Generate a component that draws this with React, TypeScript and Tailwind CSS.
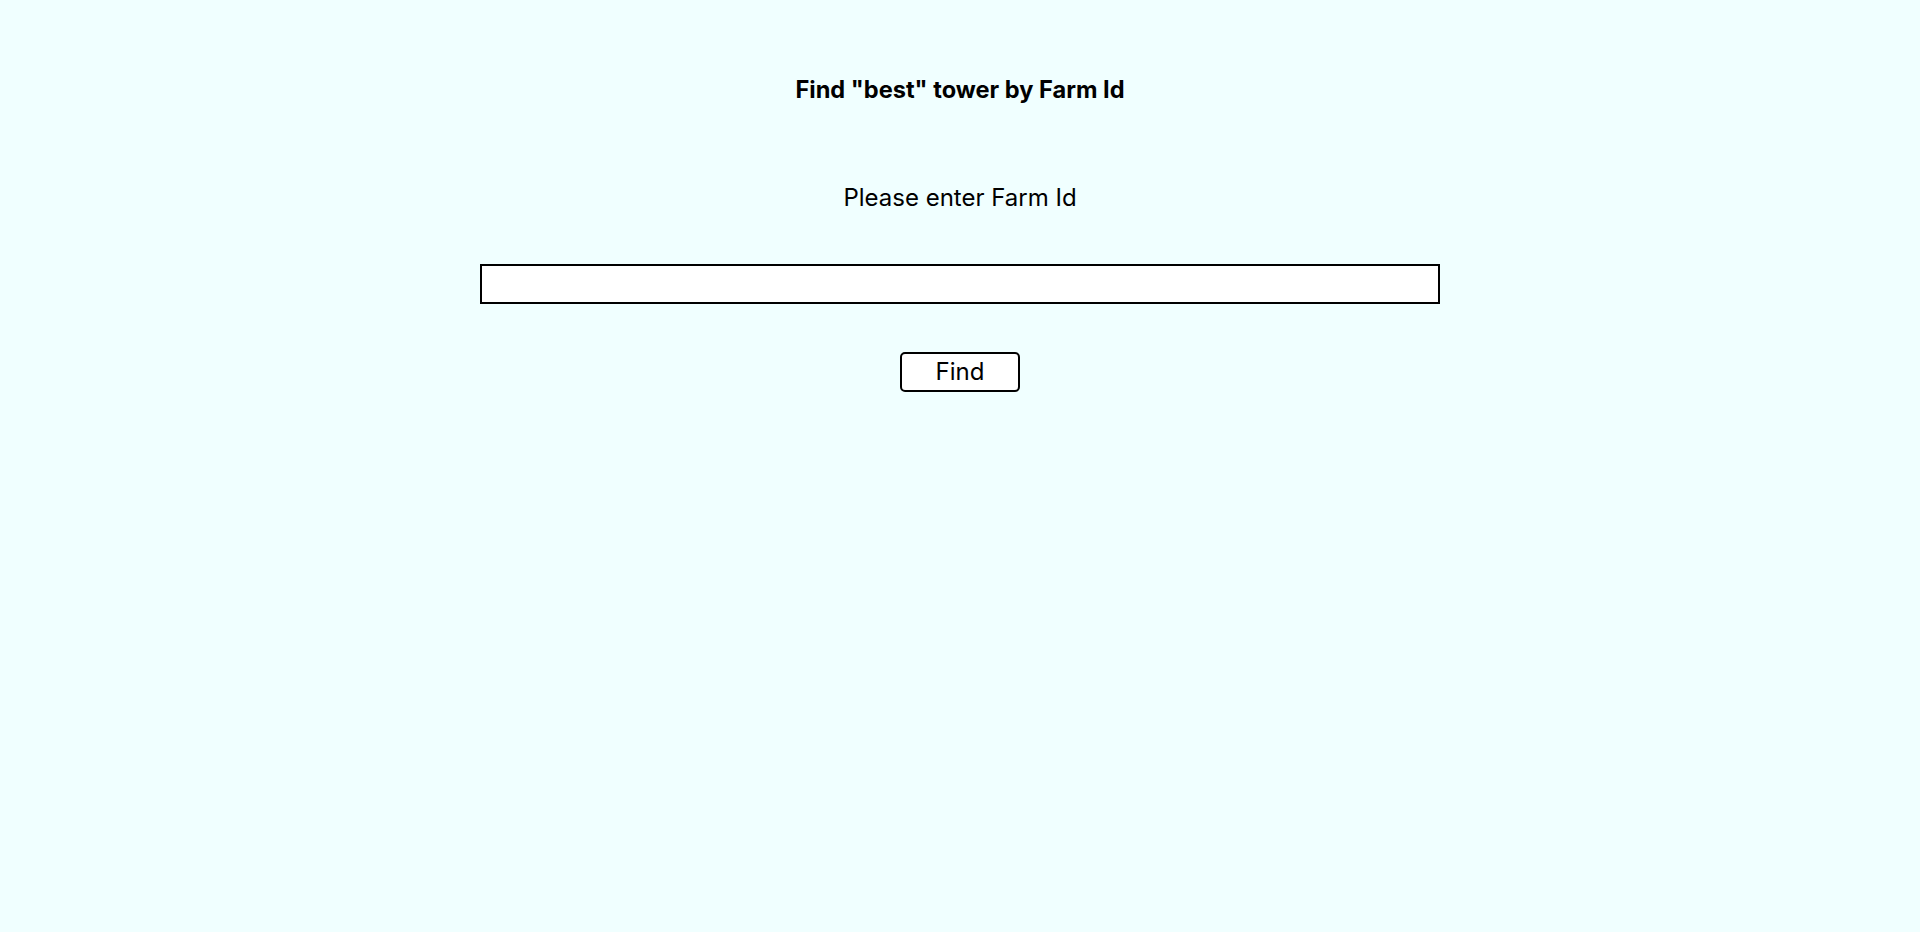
import React from "react";

export default function App() {
  return (
    <div className="min-h-[932px] w-full bg-[#f0ffff] flex flex-col items-center text-black" style={{ fontFamily: "Inter, 'Noto Sans', sans-serif" }}>
      <h1 className="mt-[76px] h-[28px] leading-[28px] text-[23.6px] font-bold">Find "best" tower by Farm Id</h1>
      <p className="mt-[79px] h-[30px] leading-[30px] text-[24px]">Please enter Farm Id</p>
      <input type="text" className="mt-[51px] w-[960px] h-[40px] border-2 border-black bg-white outline-none px-2" />
      <button className="mt-[48px] w-[120px] h-[40px] border-2 border-black rounded-[5px] bg-white text-[24px] leading-none">Find</button>
    </div>
  );
}
